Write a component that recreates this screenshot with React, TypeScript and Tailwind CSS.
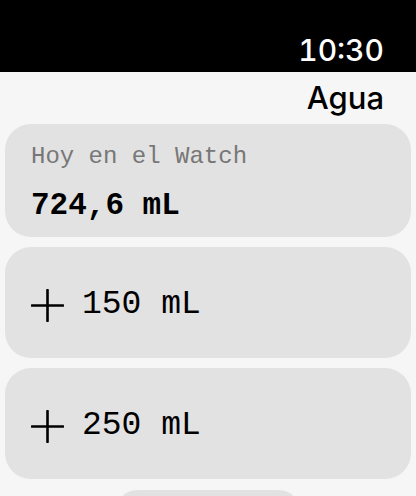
const amounts = ["150 mL", "250 mL"];

function PlusIcon() {
  return (
    <svg width="33" height="33" viewBox="0 0 33 33" className="shrink-0">
      <path d="M16.5 1v31M1 16.5h31" stroke="black" strokeWidth="2.6" strokeLinecap="round" />
    </svg>
  );
}

export default function App() {
  return (
    <div className="w-[416px] h-[496px] overflow-hidden bg-[#f6f6f6]">
      {/* Status bar */}
      <div className="h-[72px] bg-black flex items-end justify-end pr-[32px] pb-[4px]">
        <span className="text-white text-[30px] leading-[36px] font-medium font-['Inter',sans-serif] tabular-nums">
          10:30
        </span>
      </div>

      {/* Title */}
      <div className="flex justify-end pr-[32px] h-[52px] items-center">
        <span className="text-black text-[31px] leading-[36px] font-medium font-['Inter',sans-serif]">
          Agua
        </span>
      </div>

      {/* Cards */}
      <div className="flex flex-col gap-[10px] px-[5px] font-['Liberation_Mono',monospace]">
        <div className="h-[113px] rounded-[26px] bg-[#e2e2e2] px-[26px] pt-[19px]">
          <p className="text-[24px] leading-[28px] text-[#777777]">Hoy en el Watch</p>
          <p className="mt-[17px] text-[31px] leading-[36px] font-bold text-black">724,6 mL</p>
        </div>

        {amounts.map((a) => (
          <div
            key={a}
            className="h-[111px] rounded-[26px] bg-[#e2e2e2] pl-[26px] pt-[5px] flex items-center gap-[18px]"
          >
            <PlusIcon />
            <span className="text-[33px] leading-[40px] text-black">{a}</span>
          </div>
        ))}

        <div className="self-center w-[182px] h-[40px] rounded-[20px] bg-[#e2e2e2] mt-[1px]" />
      </div>
    </div>
  );
}
